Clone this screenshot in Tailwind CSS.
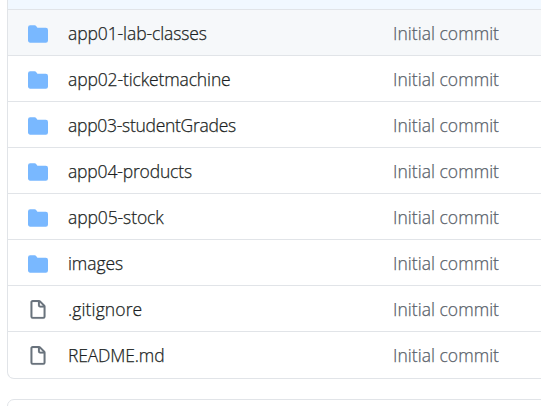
<!DOCTYPE html>
<html lang="en">
<head>
<meta charset="utf-8">
<title>Files</title>
<script src="https://cdn.jsdelivr.net/npm/@tailwindcss/browser@4"></script>
</head>
<body class="h-[406px] overflow-hidden bg-white pl-[7px] font-['Open_Sans','Noto_Sans',sans-serif] text-[17.5px] font-light text-[#1b1f23] [-webkit-text-stroke:0.25px]">
<svg class="hidden">
<symbol id="folder" viewBox="0 0 16 16"><path d="M1.75 1A1.75 1.75 0 000 2.75v10.5C0 14.216.784 15 1.75 15h12.5A1.75 1.75 0 0016 13.25v-8.5A1.75 1.75 0 0014.25 3h-6.5a.25.25 0 01-.2-.1l-.9-1.2c-.33-.44-.85-.7-1.4-.7h-3.5z"/></symbol>
<symbol id="file" viewBox="0 0 16 16"><path fill-rule="evenodd" d="M3.75 1.5a.25.25 0 00-.25.25v11.5c0 .138.112.25.25.25h8.5a.25.25 0 00.25-.25V6H9.75A1.75 1.75 0 018 4.25V1.5H3.75zm5.75.56v2.19c0 .138.112.25.25.25h2.19L9.5 2.06zM2 1.75C2 .784 2.784 0 3.75 0h5.086c.464 0 .909.184 1.237.513l3.414 3.414c.329.328.513.773.513 1.237v8.086A1.75 1.75 0 0112.25 15h-8.5A1.75 1.75 0 012 13.25V1.75z"/></symbol>
</svg>
<main class="h-[406px] w-[560px] overflow-hidden leading-6">
<div class="h-[379px] overflow-hidden rounded-b-[7px] border border-t-0 border-[#e1e4e8]">
<div class="h-[9px] bg-[#f1f8ff]"></div>
<div class="flex h-[46px] items-center border-t border-[#e1e4e8] bg-[#f6f8fa] pt-0.5 pl-5"><svg class="mr-5 size-5 fill-[#79b8ff]"><use href="#folder"/></svg><div class="w-[325px] pb-0.5"><span class="tracking-[-0.1px]">app01-lab-classes</span></div><span class="pb-0.5 tracking-[0.03px] text-[#586069]">Initial commit</span></div>
<div class="flex h-[46px] items-center border-t border-[#e1e4e8] pt-0.5 pl-5"><svg class="mr-5 size-5 fill-[#79b8ff]"><use href="#folder"/></svg><div class="w-[325px] pb-0.5"><span class="tracking-[-0.13px]">app02-ticketmachine</span></div><span class="pb-0.5 tracking-[0.03px] text-[#586069]">Initial commit</span></div>
<div class="flex h-[46px] items-center border-t border-[#e1e4e8] pt-0.5 pl-5"><svg class="mr-5 size-5 fill-[#79b8ff]"><use href="#folder"/></svg><div class="w-[325px] pb-0.5"><span class="tracking-[-0.28px]">app03-studentGrades</span></div><span class="pb-0.5 tracking-[0.03px] text-[#586069]">Initial commit</span></div>
<div class="flex h-[46px] items-center border-t border-[#e1e4e8] pt-0.5 pl-5"><svg class="mr-5 size-5 fill-[#79b8ff]"><use href="#folder"/></svg><div class="w-[325px] pb-0.5"><span class="tracking-[-0.17px]">app04-products</span></div><span class="pb-0.5 tracking-[0.03px] text-[#586069]">Initial commit</span></div>
<div class="flex h-[46px] items-center border-t border-[#e1e4e8] pt-0.5 pl-5"><svg class="mr-5 size-5 fill-[#79b8ff]"><use href="#folder"/></svg><div class="w-[325px] pb-0.5"><span class="tracking-[-0.1px]">app05-stock</span></div><span class="pb-0.5 tracking-[0.03px] text-[#586069]">Initial commit</span></div>
<div class="flex h-[46px] items-center border-t border-[#e1e4e8] pt-0.5 pl-5"><svg class="mr-5 size-5 fill-[#79b8ff]"><use href="#folder"/></svg><div class="w-[325px] pb-0.5"><span class="tracking-[-0.1px]">images</span></div><span class="pb-0.5 tracking-[0.03px] text-[#586069]">Initial commit</span></div>
<div class="flex h-[46px] items-center border-t border-[#e1e4e8] pt-0.5 pl-5"><svg class="mr-5 size-5 fill-[#6a737d] stroke-[#6a737d] stroke-[0.12]"><use href="#file"/></svg><div class="w-[325px] pb-0.5"><span class="tracking-[0.12px]">.gitignore</span></div><span class="pb-0.5 tracking-[0.03px] text-[#586069]">Initial commit</span></div>
<div class="flex h-[46px] items-center border-t border-[#e1e4e8] pt-0.5 pl-5"><svg class="mr-5 size-5 fill-[#6a737d] stroke-[#6a737d] stroke-[0.12]"><use href="#file"/></svg><div class="w-[325px] pb-0.5"><span class="tracking-[-0.15px]">README.md</span></div><span class="pb-0.5 tracking-[0.03px] text-[#586069]">Initial commit</span></div>
</div>
<div class="mt-5 h-10 rounded-[7px] border border-[#e1e4e8]"></div>
</main>
</body>
</html>
